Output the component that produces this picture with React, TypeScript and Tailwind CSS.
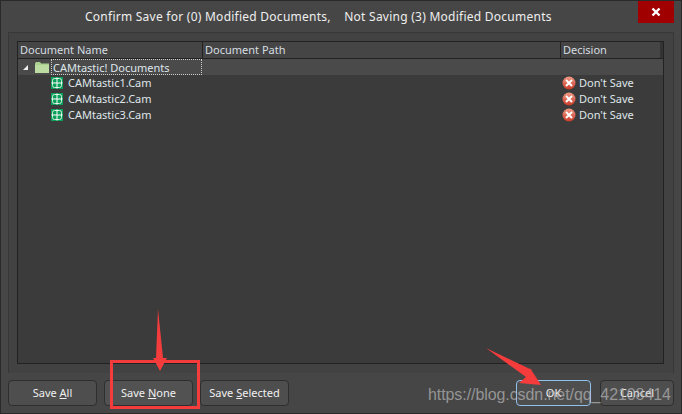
import React from 'react';

const docs = ['CAMtastic1.Cam', 'CAMtastic2.Cam', 'CAMtastic3.Cam'];

function CamIcon() {
  return (
    <svg width="12" height="12" viewBox="0 0 12 12" className="shrink-0">
      <rect width="12" height="12" fill="#0c9f5a" />
      <rect x="1.5" y="1.5" width="9" height="9" rx="2" fill="none" stroke="#cfeedd" strokeWidth="1" />
      <path d="M6 0.5V11.5M0.5 6H11.5" stroke="#ffffff" strokeWidth="1" />
    </svg>
  );
}

function FolderIcon() {
  return (
    <svg width="14" height="12" viewBox="0 0 14 12" className="shrink-0">
      <path d="M0 2.5L1 1H5L6 2.5H14V12H0Z" fill="#a9d18e" />
      <rect x="0" y="4" width="14" height="8" fill="#bcdca4" />
    </svg>
  );
}

function DontSaveIcon() {
  return (
    <svg width="14" height="14" viewBox="0 0 14 14" className="shrink-0">
      <defs>
        <linearGradient id="redBall" x1="0" y1="0" x2="0" y2="1">
          <stop offset="0" stopColor="#f09a86" />
          <stop offset="1" stopColor="#c93a28" />
        </linearGradient>
      </defs>
      <circle cx="7" cy="7" r="6.5" fill="url(#redBall)" />
      <path d="M4 4L10 10M10 4L4 10" stroke="#ffffff" strokeWidth="2" />
    </svg>
  );
}

function DialogButton({ className, children }: { className: string; children: React.ReactNode }) {
  return (
    <button className={`h-[26px] rounded-[4px] border bg-[#4e4e4e] text-[11px] text-[#f0f0f0] ${className}`}>
      {children}
    </button>
  );
}

export default function App() {
  return (
    <div className="relative w-[682px] h-[414px] overflow-hidden flex flex-col bg-[#464646] border border-[#2a2a2a] font-['Noto_Sans','Open_Sans',sans-serif] text-[11px] text-[#dfe6ea]">
      {/* Title bar */}
      <div className="relative h-[31px] shrink-0 flex items-center pl-[84px] text-[12px] tracking-[0.25px] text-[#eeeeee]">
        <span className="whitespace-pre">Confirm Save for (0) Modified Documents,    Not Saving (3) Modified Documents</span>
        <div className="absolute right-[7px] top-0 w-[36px] h-[22px] bg-[#a00000] flex items-center justify-center">
          <svg width="10" height="10" viewBox="0 0 10 10">
            <path d="M1.5 1.5L8.5 8.5M8.5 1.5L1.5 8.5" stroke="#ffffff" strokeWidth="2.4" />
          </svg>
        </div>
      </div>

      {/* Body */}
      <div className="mx-[7px] h-[341px] shrink-0 border-t border-l border-r border-[#373737] bg-[#424242] pt-[8px] pl-[8px] pr-[9px] pb-[9px]">
        <div className="h-full flex flex-col border border-[#222222] bg-[#3b3b3b]">
          <div className="h-[17px] shrink-0 flex items-center border-b border-[#222222] bg-[#454545] text-[#d5dde2]">
            <div className="w-[184px] pl-[2px]">Document Name</div>
            <div className="w-[358px] pl-[2px] border-l border-[#222222]">Document Path</div>
            <div className="flex-1 pl-[2px] border-l border-[#222222]">Decision</div>
            <div className="w-[3px] h-full bg-[#333333]" />
          </div>
          <div className="h-[16px] shrink-0 flex items-center bg-[#4a4a4a]">
            <span className="ml-[5px] mr-[7px] w-0 h-0 border-l-[5px] border-l-transparent border-b-[5px] border-b-[#eeeeee]" />
            <FolderIcon />
            <span className="ml-[2px] w-[151px] h-[16px] leading-[15px] border border-dotted border-[#cccccc] pl-px">CAMtastic! Documents</span>
          </div>
          {docs.map((doc) => (
            <div key={doc} className="h-[16px] shrink-0 flex items-center">
              <div className="w-[544px] pl-[33px] flex items-center gap-[5px]">
                <CamIcon />
                <span>{doc}</span>
              </div>
              <div className="flex items-center gap-[3px]">
                <DontSaveIcon />
                <span>Don't Save</span>
              </div>
            </div>
          ))}
        </div>
      </div>

      {/* Footer buttons */}
      <div className="flex-1 flex items-start pt-[7px] px-[7px] gap-[7px]">
        <DialogButton className="w-[89px] border-[#2e2e2e]">Save <u>A</u>ll</DialogButton>
        <DialogButton className="w-[89px] border-[#2e2e2e] bg-[#525252]">Save <u>N</u>one</DialogButton>
        <DialogButton className="w-[89px] border-[#2e2e2e]">Save <u>S</u>elected</DialogButton>
        <DialogButton className="ml-auto w-[75px] border-[#90c0ec]">OK</DialogButton>
        <DialogButton className="ml-[2px] w-[74px] border-[#2e2e2e]">Cancel</DialogButton>
      </div>

      {/* Annotation overlays */}
      <div className="absolute left-[109px] top-[359px] w-[90px] h-[49px] border-[3px] border-[#f53c3c]" />
      <svg className="absolute left-[-1px] top-[-1px] pointer-events-none" width="682" height="414" viewBox="0 0 682 414">
        <path d="M158 309L163 358H167L160 371L153 358H156Z" fill="#f53c3c" />
        <path d="M486 348L532 370L530 368L541 385L519 383L526 377Z" fill="#f53c3c" />
      </svg>
      <span className="absolute left-[427px] top-[382px] font-['Liberation_Sans',sans-serif] text-[16px] tracking-[-0.08px] text-[#b9b9b9]/70 whitespace-nowrap">https://blog.csdn.net/qq_42108414</span>
    </div>
  );
}
